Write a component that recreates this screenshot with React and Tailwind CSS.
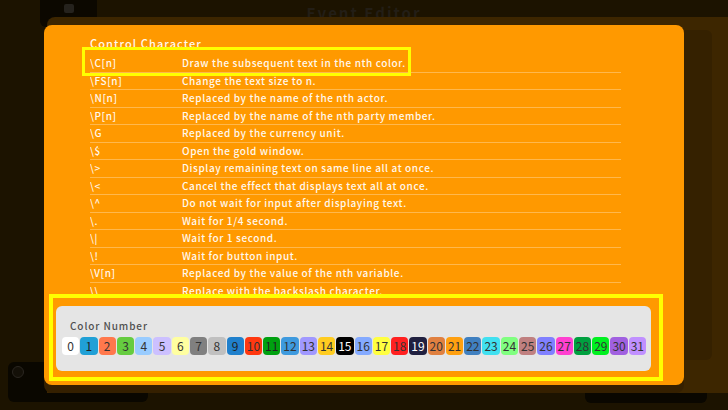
import React from "react";

const rows = [
  ["\\C[n]", "Draw the subsequent text in the nth color."],
  ["\\FS[n]", "Change the text size to n."],
  ["\\N[n]", "Replaced by the name of the nth actor."],
  ["\\P[n]", "Replaced by the name of the nth party member."],
  ["\\G", "Replaced by the currency unit."],
  ["\\$", "Open the gold window."],
  ["\\>", "Display remaining text on same line all at once."],
  ["\\<", "Cancel the effect that displays text all at once."],
  ["\\^", "Do not wait for input after displaying text."],
  ["\\.", "Wait for 1/4 second."],
  ["\\|", "Wait for 1 second."],
  ["\\!", "Wait for button input."],
  ["\\V[n]", "Replaced by the value of the nth variable."],
  ["\\\\", "Replace with the backslash character."],
];

const colors = [
  ["#ffffff", "#333"],
  ["#20a0d6", "#222"],
  ["#ff784c", "#333"],
  ["#66cc40", "#333"],
  ["#99ccff", "#333"],
  ["#ccc0ff", "#333"],
  ["#ffffa0", "#333"],
  ["#808080", "#333"],
  ["#c0c0c0", "#333"],
  ["#2080cc", "#222"],
  ["#ff3810", "#333"],
  ["#00a010", "#222"],
  ["#3e9ade", "#333"],
  ["#a098ff", "#333"],
  ["#ffcc20", "#333"],
  ["#000000", "#fff"],
  ["#84aaff", "#333"],
  ["#ffff40", "#333"],
  ["#ff2020", "#333"],
  ["#202040", "#fff"],
  ["#e08040", "#333"],
  ["#ffa010", "#333"],
  ["#4080c0", "#333"],
  ["#40e0f0", "#333"],
  ["#80ff80", "#333"],
  ["#c08080", "#333"],
  ["#8080ff", "#333"],
  ["#ff40d0", "#333"],
  ["#00a040", "#333"],
  ["#00f020", "#333"],
  ["#a060e0", "#333"],
  ["#c090ff", "#333"],
];

const font = { fontFamily: '"Noto Sans CJK JP", "Noto Sans", sans-serif' };

export default function App() {
  return (
    <div
      className="relative w-[728px] h-[410px] overflow-hidden bg-[#1c1300]"
      style={font}
    >
      {/* dimmed app behind the dialog */}
      <div className="absolute left-[40px] top-0 w-[57px] h-[27px] rounded-b-[6px] bg-[#0c0800] flex justify-center pt-[4px]">
        <div className="w-[10px] h-[9px] rounded-[2px] bg-[#25221d]" />
      </div>
      <div className="absolute left-0 right-0 top-[2px] flex justify-center">
        <span className="text-[15px] font-bold tracking-[2px] text-[#231e16]">Event Editor</span>
      </div>
      <div className="absolute left-[8px] top-[362px] w-[140px] h-[40px] rounded-[6px] bg-[#0a0700]">
        <div className="absolute left-[4px] top-[4px] w-[12px] h-[12px] rounded-full border border-[#2a2620] bg-[#141008]" />
      </div>
      <div className="absolute left-[585px] top-[380px] w-[122px] h-[23px] rounded-[6px] bg-[#0a0700]" />
      <div className="absolute left-[47px] top-[17px] right-0 h-[376px] rounded-tl-[8px] bg-[#3d2600]" />
      <div className="absolute left-[684px] top-[30px] w-[28px] h-[330px] rounded-r-[6px] bg-[#352100]" />

      {/* dialog */}
      <div className="absolute left-[44px] top-[25px] w-[640px] h-[360px] rounded-[8px] bg-[#ff9900] shadow-[0_8px_0_#352000] flex flex-col">
        <div className="pl-[46px] pt-[11px]">
          <div className="text-[11px] leading-[14px] tracking-[1.1px] font-medium text-[#fff8ee]">Control Character</div>
          <div className="mt-[5px] w-[531px] h-[241px] overflow-hidden">
            {rows.map(([c, d], i) => (
              <div
                key={i}
                className="flex items-center h-[17.5px] border-b border-[#ffb84d] text-[10px] leading-[12px] tracking-[0.6px] font-medium text-[#fff8ee]"
              >
                <span className="w-[92px] shrink-0">{c}</span>
                <span>{d}</span>
              </div>
            ))}
          </div>
        </div>
        <div className="ml-[12px] mt-[10px] w-[595px] h-[65px] rounded-[6px] bg-[#e5e5e5] pl-[6px] pr-[5px] pt-[13px]">
          <div className="pl-[8px] text-[10px] leading-[14px] tracking-[0.9px] font-medium text-[#505050]">Color Number</div>
          <div className="mt-[4px] grid grid-cols-32 gap-[1px]">
            {colors.map(([bg, fg], i) => (
              <div
                key={i}
                className="h-[18px] rounded-[4px] flex items-center justify-center text-[12px] leading-none"
                style={{ backgroundColor: bg, color: fg }}
              >
                {i}
              </div>
            ))}
          </div>
        </div>
      </div>

      {/* highlight boxes */}
      <div className="absolute left-[82px] top-[47px] w-[329px] h-[29px] border-[3.5px] border-[#ffff00]" />
      <div className="absolute left-[49px] top-[294px] w-[614px] h-[87px] border-[4.5px] border-[#ffff00]" />
    </div>
  );
}
